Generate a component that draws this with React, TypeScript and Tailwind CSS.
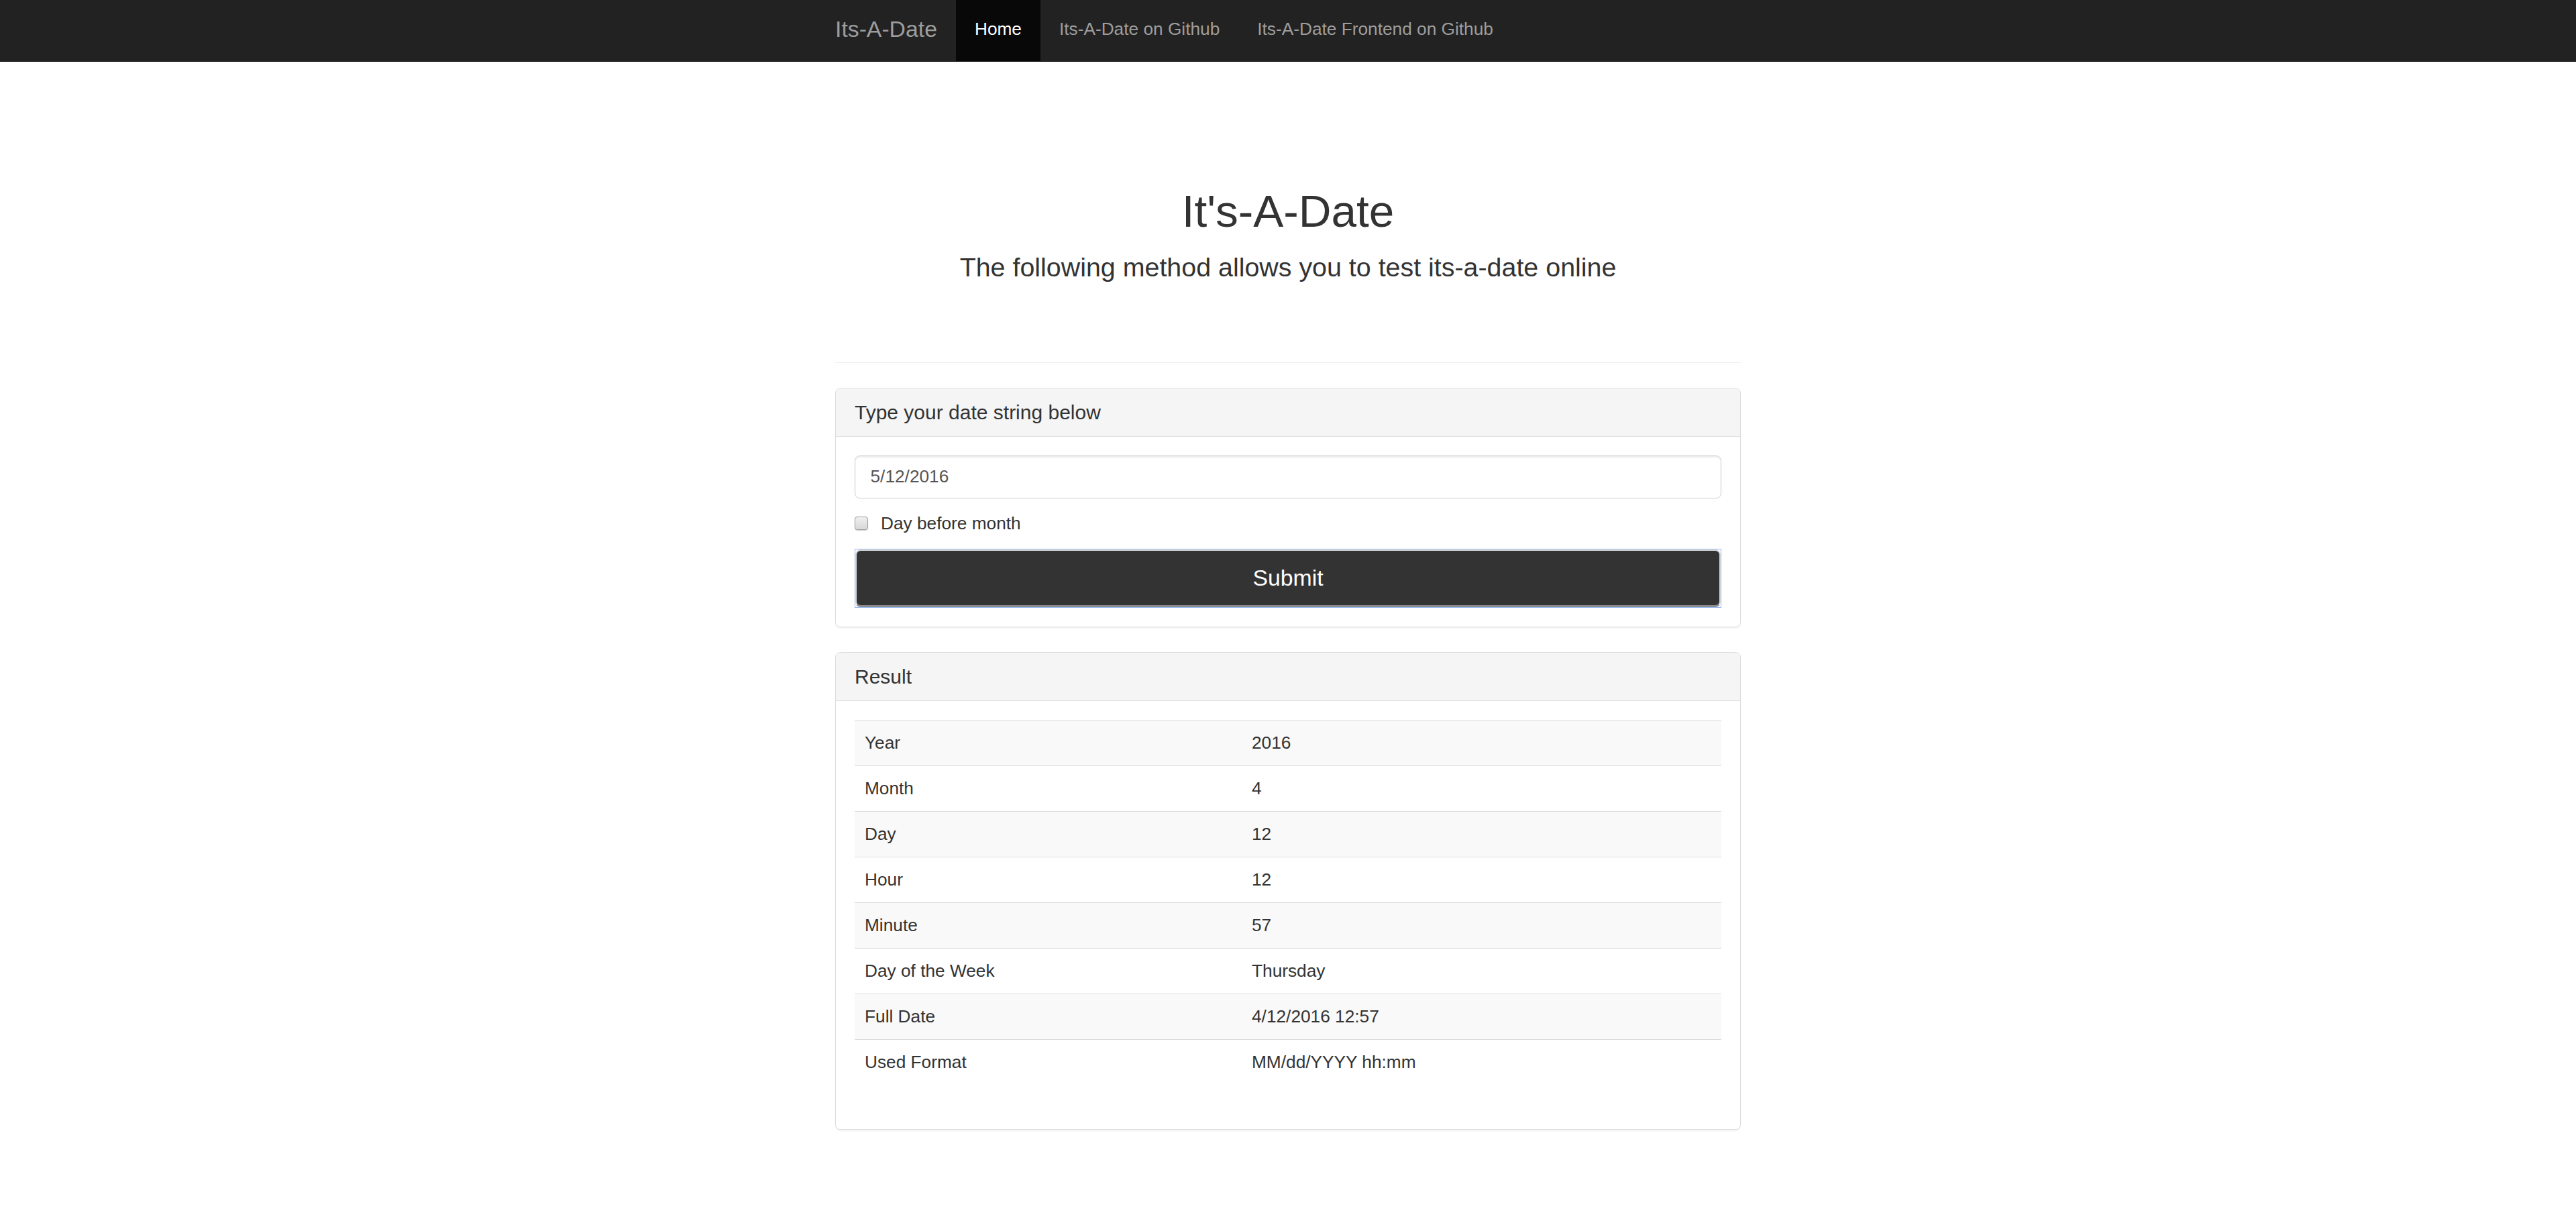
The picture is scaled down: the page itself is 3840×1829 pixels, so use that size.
import React from 'react';

const rows: [string, string][] = [
  ['Year', '2016'],
  ['Month', '4'],
  ['Day', '12'],
  ['Hour', '12'],
  ['Minute', '57'],
  ['Day of the Week', 'Thursday'],
  ['Full Date', '4/12/2016 12:57'],
  ['Used Format', 'MM/dd/YYYY hh:mm'],
];

function Panel({ title, children }: { title: string; children: React.ReactNode }) {
  return (
    <div className="border border-[#ddd] rounded-[7.5px] bg-white shadow-[0_2px_2px_rgba(0,0,0,0.05)] overflow-hidden">
      <div className="h-[72px] bg-[#f5f5f5] border-b border-[#ddd] px-[28px] pt-[18.75px] text-[30px] leading-[33px] text-[#333]">
        {title}
      </div>
      <div className="p-[28px]">{children}</div>
    </div>
  );
}

export default function App() {
  return (
    <div className="min-h-screen bg-white text-[#333] font-['Liberation_Sans',Arial,sans-serif]">
      {/* Navbar */}
      <nav className="h-[92px] bg-[#222] border-b border-[#080808]">
        <div className="w-[1406px] mx-auto flex h-full">
          <a className="px-[28px] pt-[25px] text-[33.75px] leading-[37.5px] text-[#9d9d9d]">Its-A-Date</a>
          <a className="px-[28px] pt-[25px] bg-[#080808] text-white text-[26.25px] leading-[37.5px]">Home</a>
          <a className="px-[28px] pt-[25px] text-[#9d9d9d] text-[26.25px] leading-[37.5px]">Its-A-Date on Github</a>
          <a className="px-[28px] pt-[25px] text-[#9d9d9d] text-[26.25px] leading-[37.5px]">Its-A-Date Frontend on Github</a>
        </div>
      </nav>

      <div className="w-[1406px] mx-auto px-[28px] pb-[80px]">
        {/* Header */}
        <h1 className="mt-[186px] text-center text-[67.5px] leading-[74px] font-normal">It's-A-Date</h1>
        <p className="mt-[18.75px] text-center text-[39.4px] leading-[55px]">
          The following method allows you to test its-a-date online
        </p>
        <hr className="mt-[114px] border-0 border-t border-[#eee]" />

        {/* Input panel */}
        <div className="mt-[37px]">
          <Panel title="Type your date string below">
            <input
              type="text"
              defaultValue="5/12/2016"
              className="w-full h-[64px] px-[22.5px] border border-[#ccc] rounded-[7.5px] text-[26.25px] text-[#555] shadow-[inset_0_2px_2px_rgba(0,0,0,0.075)] outline-none"
            />
            <div className="mt-[18.75px] flex items-center h-[37.5px] text-[26.25px] leading-[37.5px]">
              <span className="w-[20px] h-[20px] rounded-[4px] border border-[#9a9a9a] bg-gradient-to-b from-[#f0f0f0] to-[#d8d8d8] shadow-[0_1px_1px_rgba(0,0,0,0.2)]" />
              <span className="ml-[19px]">Day before month</span>
            </div>
            <div className="mt-[18.75px] border border-[#93b6f0] bg-white">
              <button className="w-full h-[86px] rounded-[8px] bg-[#333] border-2 border-[#dcdcdc] border-b-[3px] border-b-[#8a8a8a] text-white text-[33.75px]">
                Submit
              </button>
            </div>
          </Panel>
        </div>

        {/* Result panel */}
        <div className="mt-[37.5px]">
          <Panel title="Result">
            <table className="w-full mb-[37.5px] border-collapse text-[26.25px]">
              <tbody>
                {rows.map(([k, v], i) => (
                  <tr key={k} className={i % 2 === 0 ? 'bg-[#f9f9f9]' : 'bg-white'}>
                    <td className="w-[577px] border-t border-[#ddd] px-[15px] py-[15px] leading-[37px]">{k}</td>
                    <td className="border-t border-[#ddd] px-[15px] py-[15px] leading-[37px]">{v}</td>
                  </tr>
                ))}
              </tbody>
            </table>
          </Panel>
        </div>
      </div>
    </div>
  );
}
